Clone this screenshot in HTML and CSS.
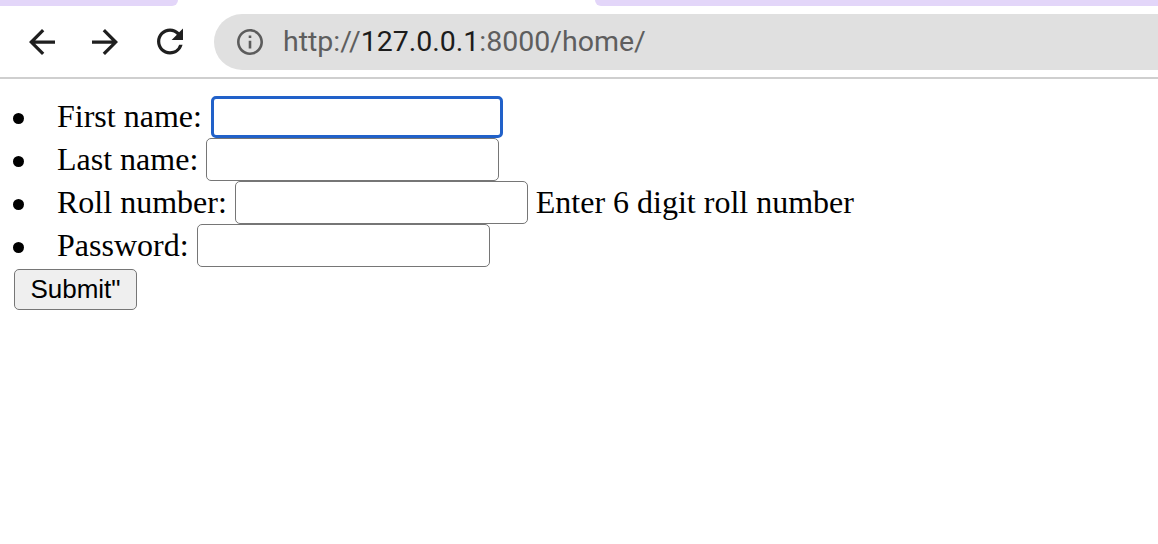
FILE: index.html
```html
<!DOCTYPE html>
<html>
<head>
<meta charset="utf-8">
<title>Home</title>
<link rel="stylesheet" href="styles.css">
</head>
<body>
<div class="chrome">
  <div class="tabstrip">
    <div class="tab-left"></div>
    <div class="tab-right"></div>
  </div>
  <div class="toolbar">
    <span class="nav-icon back">
      <svg width="26" height="26" viewBox="4 4 16 16"><path d="M20 11H7.83l5.59-5.59L12 4l-8 8 8 8 1.41-1.41L7.83 13H20v-2z" fill="#1f1f1f"/></svg>
    </span>
    <span class="nav-icon forward">
      <svg width="26" height="26" viewBox="4 4 16 16"><path d="M4 11h12.17l-5.59-5.59L12 4l8 8-8 8-1.41-1.41L16.17 13H4v-2z" fill="#1f1f1f"/></svg>
    </span>
    <span class="nav-icon reload">
      <svg width="27" height="27" viewBox="4 4 16 16"><path d="M17.65 6.35A7.958 7.958 0 0 0 12 4c-4.42 0-7.99 3.58-7.99 8s3.57 8 7.99 8c3.73 0 6.84-2.55 7.73-6h-2.08A5.99 5.99 0 0 1 12 18c-3.31 0-6-2.69-6-6s2.69-6 6-6c1.66 0 3.14.69 4.22 1.78L13 11h7V4l-2.35 2.35z" fill="#1f1f1f"/></svg>
    </span>
    <div class="omnibox">
      <svg class="info" width="26" height="26" viewBox="2 2 20 20"><path d="M11 7h2v2h-2zm0 4h2v6h-2zm1-9C6.48 2 2 6.48 2 12s4.48 10 10 10 10-4.48 10-10S17.52 2 12 2zm0 18c-4.41 0-8-3.59-8-8s3.59-8 8-8 8 3.59 8 8-3.59 8-8 8z" fill="#5c5c5c"/></svg>
      <span class="url"><span class="dim">http://</span><span class="host">127.0.0.1</span><span class="dim">:8000/home/</span></span>
    </div>
  </div>
</div>
<main class="page">
  <form class="form">
    <ul class="fields">
      <li><div class="row">First name:<input type="text" class="field focused"></div></li>
      <li><div class="row">Last name:<input type="text" class="field"></div></li>
      <li><div class="row">Roll number:<input type="text" class="field"><span class="hint">Enter 6 digit roll number</span></div></li>
      <li><div class="row">Password:<input type="password" class="field"></div></li>
    </ul>
    <button type="button" class="submit">Submit"</button>
  </form>
</main>
</body>
</html>
```

FILE: styles.css
```css
html, body {
  margin: 0;
  padding: 0;
  background: #ffffff;
}

.chrome {
  border-bottom: 2px solid #cfcfcf;
}

.tabstrip {
  height: 6px;
  display: flex;
  justify-content: space-between;
}

.tab-left {
  width: 178px;
  background: #e3d6f9;
  border-bottom-right-radius: 8px;
}

.tab-right {
  width: 563px;
  background: #e3d6f9;
  border-bottom-left-radius: 10px;
}

.toolbar {
  height: 71px;
  display: flex;
  align-items: center;
}

.nav-icon {
  display: flex;
  width: 26px;
  height: 26px;
  align-items: center;
  justify-content: center;
}

.back { margin-left: 29px; }
.forward { margin-left: 37px; }
.reload { margin-left: 39px; }

.omnibox {
  margin-left: 31px;
  flex: 1;
  height: 56px;
  background: #e0e0e0;
  border-radius: 28px 0 0 28px;
  display: flex;
  align-items: center;
  padding-left: 23px;
}

.info {
  flex: none;
}

.url {
  margin-left: 20px;
  font-family: Roboto, "Liberation Sans", sans-serif;
  font-size: 28.5px;
  color: #5e5e5e;
}

.host {
  color: #1c1c1c;
}

.page {
  padding: 16px 14px;
  font-family: "Liberation Serif", "Times New Roman", serif;
  font-size: 32px;
  color: #000;
}

.form {
  margin: 0;
}

.fields {
  margin: 0 0 0 -2px;
  padding: 0;
  list-style: none;
}

.fields li {
  height: 43px;
}

.row {
  display: flex;
  align-items: center;
  height: 43px;
  white-space: pre;
}

.row::before {
  content: "";
  flex: none;
  width: 11px;
  height: 11px;
  border-radius: 50%;
  background: #000;
  margin: 3px 33px 0 1px;
}

.field {
  box-sizing: border-box;
  width: 293px;
  height: 43px;
  margin: 0 0 0 8px;
  border: 1.5px solid #767676;
  border-radius: 5px;
  background: #fff;
  padding: 0;
}

.field.focused {
  height: 42px;
  border: 3px solid #2161c9;
  margin-left: 9px;
  width: 292px;
}

.hint {
  margin-left: 8px;
}

.submit {
  display: block;
  margin-top: 2px;
  box-sizing: border-box;
  width: 123px;
  height: 41px;
  padding: 0;
  font-family: "Liberation Sans", Arial, sans-serif;
  font-size: 26px;
  color: #000;
  background: #efefef;
  border: 1.5px solid #767676;
  border-radius: 5px;
}
```
